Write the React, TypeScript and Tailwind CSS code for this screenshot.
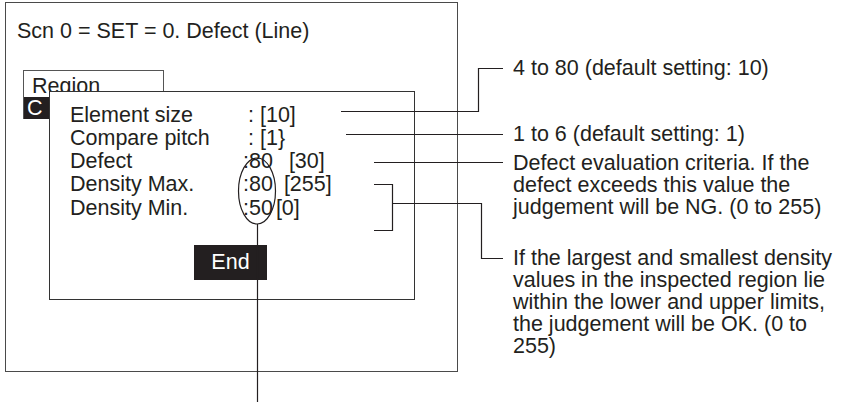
import React from "react"

const rows = [
  { label: "Element size", value: <span className="pl-[5px]">: [10]</span> },
  { label: "Compare pitch", value: <span className="pl-[5px]">{": [1}"}</span> },
  {
    label: "Defect",
    value: (
      <>
        <span>:80</span>
        <span className="ml-[16px]">[30]</span>
      </>
    ),
  },
  {
    label: "Density Max.",
    value: (
      <>
        <span>:80</span>
        <span className="ml-[11px]">[255]</span>
      </>
    ),
  },
  {
    label: "Density Min.",
    value: (
      <>
        <span>:50</span>
        <span className="ml-[3px]">[0]</span>
      </>
    ),
  },
]

function Callouts() {
  return (
    <svg
      className="absolute inset-0 pointer-events-none"
      width="847"
      height="402"
      viewBox="0 0 847 402"
      fill="none"
      stroke="#231f20"
      strokeWidth="1.2"
    >
      {/* element size */}
      <path d="M341 111.5H478.5V68.5H503" />
      {/* compare pitch */}
      <path d="M346 134.5H503" />
      {/* defect */}
      <path d="M374 162.5H503" />
      {/* density bracket */}
      <path d="M374 184.5H392.5V230.5H374" />
      <path d="M392.5 203.5H481.5V258.5H503" />
      {/* measured value marker */}
      <ellipse cx="257" cy="191" rx="18.5" ry="33" />
      <path d="M257.5 224V402" />
    </svg>
  )
}

export default function App() {
  return (
    <div className="relative w-[847px] h-[402px] bg-white overflow-hidden text-[#231f20] font-['Liberation_Sans',Arial,sans-serif] text-[21.5px]">
      <div className="flex">
        {/* Screen */}
        <div className="w-[513px] shrink-0">
          <div className="relative ml-[5px] mt-[2px] w-[453px] h-[370px] border border-[#4a4a4a]">
            <div className="pl-[11px] pt-[15.5px] leading-[24px] whitespace-nowrap">Scn 0 = SET = 0. Defect (Line)</div>

            {/* menu under the dialog */}
            <div className="ml-[17px] mt-[27.5px] w-[141px] border-l border-t border-r border-[#555]">
              <div className="h-[26px] pl-[8px] pt-[3px] leading-[24px]">Region</div>
              <div className="h-[22px] bg-[#231f20] text-white pl-[3px] leading-[22px]">C</div>
            </div>

            {/* dialog */}
            <div className="absolute left-[43px] top-[88px] w-[366px] h-[209px] bg-white border border-[#333]">
              <div className="pl-[20px] pt-[11.5px] grid grid-cols-[173px_auto] leading-[23.3px] whitespace-nowrap">
                {rows.map((row, i) => (
                  <React.Fragment key={i}>
                    <div>{row.label}</div>
                    <div>{row.value}</div>
                  </React.Fragment>
                ))}
              </div>
              <div className="flex justify-center mt-[25px] pr-[3px]">
                <div className="w-[73px] h-[35px] bg-[#231f20] text-white flex items-center justify-center leading-none">
                  End
                </div>
              </div>
            </div>
          </div>
        </div>

        {/* Notes */}
        <div className="flex flex-col leading-[22px] whitespace-nowrap pt-[56.5px]">
          <p>4 to 80 (default setting: 10)</p>
          <p className="mt-[44px]">1 to 6 (default setting: 1)</p>
          <p className="mt-[7px]">
            Defect evaluation criteria. If the
            <br />
            defect exceeds this value the
            <br />
            judgement will be NG. (0 to 255)
          </p>
          <p className="mt-[29px]">
            If the largest and smallest density
            <br />
            values in the inspected region lie
            <br />
            within the lower and upper limits,
            <br />
            the judgement will be OK. (0 to
            <br />
            255)
          </p>
        </div>
      </div>

      <Callouts />
    </div>
  )
}
